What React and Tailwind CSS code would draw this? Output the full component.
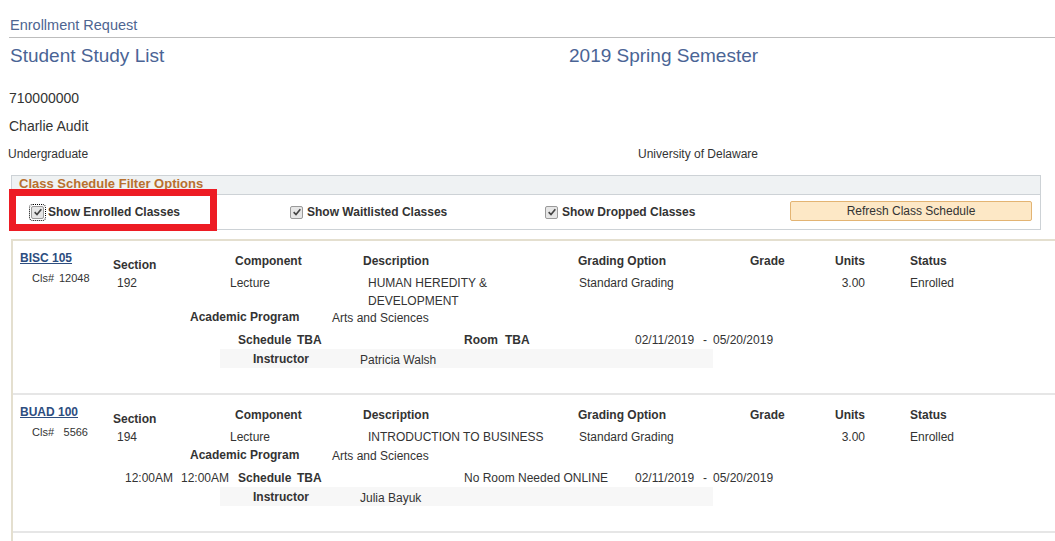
const courses = [
  {
    code: "BISC 105",
    cls: "12048",
    section: "192",
    component: "Lecture",
    description: ["HUMAN HEREDITY &", "DEVELOPMENT"],
    grading: "Standard Grading",
    units: "3.00",
    status: "Enrolled",
    program: "Arts and Sciences",
    times: null,
    room: null,
    dates: ["02/11/2019", "05/20/2019"],
    instructor: "Patricia Walsh",
  },
  {
    code: "BUAD 100",
    cls: "5566",
    section: "194",
    component: "Lecture",
    description: ["INTRODUCTION TO BUSINESS"],
    grading: "Standard Grading",
    units: "3.00",
    status: "Enrolled",
    program: "Arts and Sciences",
    times: ["12:00AM", "12:00AM"],
    room: "No Room Needed ONLINE",
    dates: ["02/11/2019", "05/20/2019"],
    instructor: "Julia Bayuk",
  },
];

const Check = ({ focused }) => (
  <span
    className={
      "relative inline-flex items-center justify-center w-[13px] h-[13px] border border-[#9a9a9a] bg-[#e6e6e6] rounded-[2px] " +
      (focused ? "outline outline-1 outline-dotted outline-black outline-offset-[1px]" : "")
    }
  >
    <svg viewBox="0 0 12 12" className="w-[10px] h-[10px]">
      <path d="M2 6.2 L4.8 9 L10 2.8" fill="none" stroke="#444" strokeWidth="2" />
    </svg>
  </span>
);

const Course = ({ c }) => (
  <div className="border-b-2 border-[#e6e6e6] pt-[10px] pb-[25px] text-[12px] text-[#333]">
    {/* top row */}
    <div className="flex items-start">
      <div className="w-[100px] pl-[7px]">
        <a className="block leading-[14px] font-bold text-[#2d4d7f] underline">{c.code}</a>
        <div className="mt-[6px] pl-[12px] leading-[14px] text-[11px] flex">
          <span className="w-[27px]">Cls#</span>
          <span className="w-[29px] text-right">{c.cls}</span>
        </div>
      </div>
      <div className="w-[117px] mt-[7px]">
        <div className="font-bold leading-[14px]">Section</div>
        <div className="mt-[2px] pl-[4px] leading-[18px]">{c.section}</div>
      </div>
      <div className="w-[133px] mt-[3px]">
        <div className="pl-[5px] font-bold leading-[14px]">Component</div>
        <div className="mt-[6px] leading-[18px]">{c.component}</div>
      </div>
      <div className="w-[215px] mt-[3px]">
        <div className="font-bold leading-[14px]">Description</div>
        <div className="mt-[6px] pl-[5px] leading-[18px]">
          {c.description.map((d) => (
            <div key={d}>{d}</div>
          ))}
        </div>
      </div>
      <div className="w-[172px] mt-[3px]">
        <div className="font-bold leading-[14px]">Grading Option</div>
        <div className="mt-[6px] pl-[1px] leading-[18px]">{c.grading}</div>
      </div>
      <div className="w-[85px] mt-[3px]">
        <div className="font-bold leading-[14px]">Grade</div>
      </div>
      <div className="w-[75px] mt-[3px]">
        <div className="w-[30px] font-bold leading-[14px]">Units</div>
        <div className="w-[30px] mt-[6px] text-right leading-[18px]">{c.units}</div>
      </div>
      <div className="mt-[3px]">
        <div className="font-bold leading-[14px]">Status</div>
        <div className="mt-[6px] leading-[18px]">{c.status}</div>
      </div>
    </div>

    {/* academic program */}
    <div className={"flex ml-[177px] leading-[14px] " + (c.description.length > 1 ? "mt-0" : "mt-[2px]")}>
      <span className="w-[142px] font-bold">Academic Program</span>
      <span className="mt-[1px]">{c.program}</span>
    </div>

    {/* schedule */}
    <div className="flex mt-[8px] ml-[112px] leading-[14px]">
      <div className="w-[113px] flex">
        {c.times && (
          <>
            <span className="w-[56px]">{c.times[0]}</span>
            <span>{c.times[1]}</span>
          </>
        )}
      </div>
      <span className="w-[59px] font-bold">Schedule</span>
      <span className="w-[167px] font-bold">TBA</span>
      <div className="w-[171px] flex">
        {c.room ? (
          <span>{c.room}</span>
        ) : (
          <>
            <span className="w-[41px] font-bold">Room</span>
            <span className="font-bold">TBA</span>
          </>
        )}
      </div>
      <span className="w-[68px]">{c.dates[0]}</span>
      <span className="w-[10px]">-</span>
      <span>{c.dates[1]}</span>
    </div>

    {/* instructor */}
    <div className="flex items-center mt-[2px] ml-[207px] w-[493px] h-[19px] bg-[#f7f7f7]">
      <span className="ml-[33px] w-[107px] font-bold">Instructor</span>
      <span className="mt-[2px]">{c.instructor}</span>
    </div>
  </div>
);

export default function App() {
  return (
    <div className="relative w-[1055px] h-[541px] overflow-hidden bg-white font-['Liberation_Sans',Arial,sans-serif] text-[#333]">
      {/* page title */}
      <div className="pt-[17px] pl-[9px]">
        <div className="border-b border-[#bdbdbd] pb-[4px]">
          <div className="ml-[1px] text-[14.5px] leading-[16px] text-[#4e6591]">Enrollment Request</div>
        </div>
      </div>

      <div className="flex mt-[7px] pl-[10px] text-[19px] leading-[22px] text-[#4a6495]">
        <span className="w-[559px]">Student Study List</span>
        <span>2019 Spring Semester</span>
      </div>

      <div className="pl-[9px] mt-[23px] text-[14px] leading-[16px]">710000000</div>
      <div className="pl-[9px] mt-[12px] text-[14px] leading-[16px]">Charlie Audit</div>
      <div className="flex pl-[8px] mt-[13px] text-[12px] leading-[14px]">
        <span className="w-[630px]">Undergraduate</span>
        <span>University of Delaware</span>
      </div>

      {/* filter options */}
      <div className="relative mt-[14px] ml-[11px] w-[1030px] border border-[#cdd2d6]">
        <div className="h-[19px] bg-[#eff2f3] border-b border-[#cdd2d6] pl-[7px] text-[13px] leading-[16px] font-bold text-[#b8702f]">
          Class Schedule Filter Options
        </div>
        <div className="flex items-center h-[34px] text-[12px] font-bold text-[#333]">
          <label className="flex items-center gap-[4px] ml-[19px] w-[259px]">
            <Check focused />
            <span>Show Enrolled Classes</span>
          </label>
          <label className="flex items-center gap-[4px] w-[255px]">
            <Check />
            <span>Show Waitlisted Classes</span>
          </label>
          <label className="flex items-center gap-[4px] w-[245px]">
            <Check />
            <span>Show Dropped Classes</span>
          </label>
          <button className="mb-[2px] w-[242px] h-[20px] bg-[#fde8c6] border border-[#e3b473] rounded-[2px] text-[12px] font-normal text-[#333] leading-[18px]">
            Refresh Class Schedule
          </button>
        </div>
      </div>

      {/* highlight */}
      <div className="absolute left-[9px] top-[189px] w-[208px] h-[42px] border-[7px] border-[#ed1c24]" />

      {/* schedule */}
      <div className="mt-[9px] ml-[11px] border-t-2 border-l-2 border-[#e4dfcf] h-[400px]">
        {courses.map((c) => (
          <Course key={c.code} c={c} />
        ))}
      </div>
    </div>
  );
}
